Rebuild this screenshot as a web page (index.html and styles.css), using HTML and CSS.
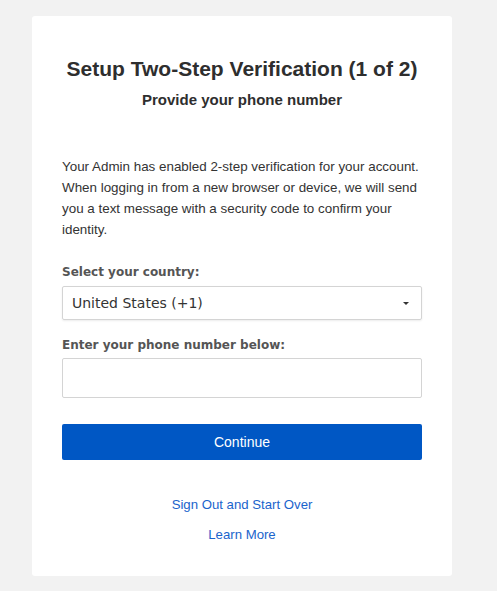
FILE: index.html
```html
<!DOCTYPE html>
<html lang="en">
<head>
  <meta charset="UTF-8">
  <meta name="viewport" content="width=device-width, initial-scale=1.0">
  <title>Setup Two-Step Verification</title>
  <link rel="stylesheet" href="styles.css">
</head>
<body>
  <div class="card">
    <h1>Setup Two-Step Verification (1 of 2)</h1>
    <h2>Provide your phone number</h2>

    <p class="intro">Your Admin has enabled 2-step verification for your account. When logging in from a new browser or device, we will send you a text message with a security code to confirm your identity.</p>

    <label class="label" for="country">Select your country:</label>
    <div class="select">
      <span id="country">United States (+1)</span>
      <span class="caret"></span>
    </div>

    <label class="label label-phone" for="phone">Enter your phone number below:</label>
    <input class="phone" id="phone" type="text">

    <button class="continue">Continue</button>

    <div class="links">
      <a href="#">Sign Out and Start Over</a>
      <a href="#">Learn More</a>
    </div>
  </div>
</body>
</html>
```

FILE: styles.css
```css
body {
  margin: 0;
  background-color: #f2f2f2;
  font-family: "Liberation Sans", Arial, sans-serif;
  color: #333;
}
.card {
  background-color: #fff;
  width: 360px;
  margin: 16px 0 16px 32px;
  padding: 41px 30px 33px;
  border-radius: 3px;
}
h1 {
  margin: 0;
  font-size: 21px;
  line-height: 24px;
  text-align: center;
  color: #2e2e2e;
}
h2 {
  margin: 9px 0 0;
  font-size: 15px;
  line-height: 20px;
  text-align: center;
  color: #2e2e2e;
}
.intro {
  margin: 46px -10px 0 0;
  font-size: 13.4px;
  line-height: 21px;
  color: #333;
}
.label {
  display: block;
  margin-top: 24px;
  font-family: "DejaVu Sans", Verdana, sans-serif;
  font-weight: bold;
  font-size: 12px;
  line-height: 16px;
  color: #555;
}
.label-phone {
  margin-top: 17px;
}
.select {
  margin-top: 6px;
  height: 32px;
  border: 1px solid #d4d4d4;
  border-radius: 2px;
  box-shadow: 0 1px 2px rgba(0,0,0,0.08);
  display: flex;
  align-items: center;
  justify-content: space-between;
  padding: 0 10px 0 9px;
  font-family: "DejaVu Sans", Verdana, sans-serif;
  font-size: 14px;
  color: #333;
}
.caret {
  width: 0;
  height: 0;
  border-left: 3px solid transparent;
  border-right: 3px solid transparent;
  border-top: 3px solid #333;
  margin-right: 2px;
}
.phone {
  display: block;
  box-sizing: border-box;
  width: 100%;
  height: 40px;
  margin-top: 5px;
  border: 1px solid #d4d4d4;
  border-radius: 2px;
  padding: 0 10px;
  font-size: 15px;
}
.continue {
  display: block;
  width: 100%;
  height: 36px;
  margin-top: 26px;
  background-color: #0057c4;
  color: #fff;
  border: none;
  border-radius: 2px;
  font-family: "Liberation Sans", Arial, sans-serif;
  font-size: 14px;
  cursor: pointer;
}
.links {
  margin-top: 37px;
  display: flex;
  flex-direction: column;
  align-items: center;
  gap: 14px;
}
.links a {
  font-size: 13.2px;
  line-height: 16px;
  color: #1a64cc;
  text-decoration: none;
}
```
